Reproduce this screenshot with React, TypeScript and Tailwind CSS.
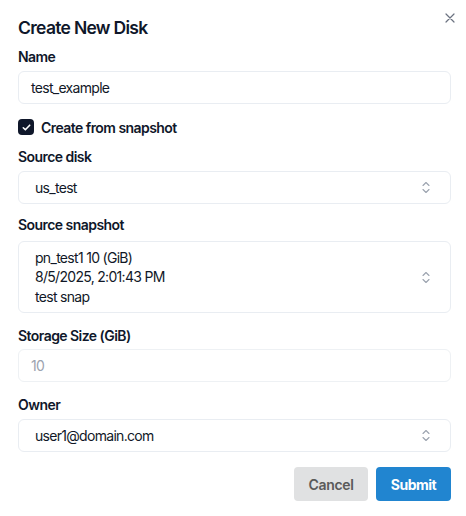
import React from "react";

function Chevrons() {
  return (
    <svg width="8" height="13" viewBox="0 0 8 13" fill="none" stroke="#9ca3af" strokeWidth="1.1" strokeLinecap="round" strokeLinejoin="round">
      <path d="M1 4.5L4 1.5L7 4.5" />
      <path d="M1 8.5L4 11.5L7 8.5" />
    </svg>
  );
}

function Label({ children }: { children: React.ReactNode }) {
  return <div className="text-[14px] leading-[20px] font-semibold text-[#0f172a] tracking-[-0.55px]">{children}</div>;
}

export default function App() {
  return (
    <div className="w-[466px] h-[516px] bg-white relative" style={{ fontFamily: "Inter, 'Noto Sans', sans-serif" }}>
      <button className="absolute right-[11px] top-[13px] text-[#6b7280]">
        <svg width="10" height="10" viewBox="0 0 10 10" fill="none" stroke="currentColor" strokeWidth="1.2" strokeLinecap="round">
          <path d="M1 1l8 8M9 1L1 9" />
        </svg>
      </button>
      <div className="pl-[18px] pr-[15px] pt-[17px] flex flex-col">
        <h2 className="text-[17.5px] leading-[22px] font-semibold text-[#0f172a] tracking-[-0.7px]">Create New Disk</h2>

        <div className="mt-[8px]"><Label>Name</Label></div>
        <div className="mt-[4px] h-[33px] border border-[#e9edf2] rounded-[6px] flex items-center px-[12px] text-[14px] tracking-[-0.7px] text-[#111827]">
          test_example
        </div>

        <div className="mt-[13px] flex items-center gap-[7px] h-[20px]">
          <div className="w-[16px] h-[16px] rounded-[4px] bg-[#0f172a] flex items-center justify-center">
            <svg width="11" height="11" viewBox="0 0 24 24" fill="none" stroke="white" strokeWidth="3.5" strokeLinecap="round" strokeLinejoin="round">
              <path d="M5 12.5l4.5 4.5L19 7" />
            </svg>
          </div>
          <span className="text-[14px] font-semibold text-[#0f172a] tracking-[-0.55px]">Create from snapshot</span>
        </div>

        <div className="mt-[10px]"><Label>Source disk</Label></div>
        <div className="mt-[4px] h-[33px] border border-[#e9edf2] rounded-[6px] flex items-center justify-between pl-[16px] pr-[20px] text-[14px] tracking-[-0.7px] text-[#111827]">
          <span>us_test</span>
          <Chevrons />
        </div>

        <div className="mt-[11px]"><Label>Source snapshot</Label></div>
        <div className="mt-[6px] h-[72px] border border-[#e9edf2] rounded-[6px] flex items-center justify-between pl-[16px] pr-[20px] text-[14px] leading-[19.5px] tracking-[-0.7px] text-[#111827]">
          <div className="flex flex-col">
            <span>pn_test1 10 (GiB)</span>
            <span>8/5/2025, 2:01:43 PM</span>
            <span>test snap</span>
          </div>
          <Chevrons />
        </div>

        <div className="mt-[13px]"><Label>Storage Size (GiB)</Label></div>
        <div className="mt-[3px] h-[33px] border border-[#eef1f4] rounded-[6px] flex items-center px-[12px] text-[14px] tracking-[-0.7px] text-[#9ca3af]">
          10
        </div>

        <div className="mt-[13px]"><Label>Owner</Label></div>
        <div className="mt-[4px] h-[33px] border border-[#e9edf2] rounded-[6px] flex items-center justify-between pl-[16px] pr-[20px] text-[14px] tracking-[-0.7px] text-[#111827]">
          <span>user1@domain.com</span>
          <Chevrons />
        </div>

        <div className="mt-[15px] flex justify-end gap-[8px]">
          <button className="w-[74px] h-[34px] rounded-[4px] bg-[#e0e1e2] text-[#5a5a5a] text-[14px] font-semibold tracking-[-0.3px]">Cancel</button>
          <button className="w-[75px] h-[34px] rounded-[4px] bg-[#2185d0] text-white text-[14px] font-bold tracking-[-0.5px]">Submit</button>
        </div>
      </div>
    </div>
  );
}
